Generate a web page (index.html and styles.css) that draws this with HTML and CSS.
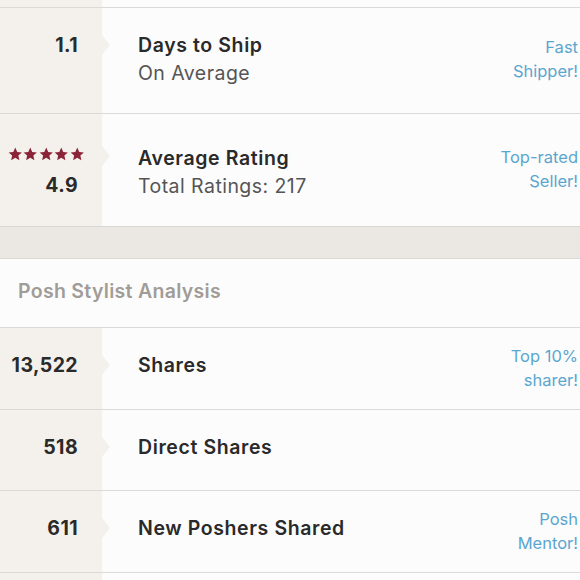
FILE: index.html
```html
<!DOCTYPE html>
<html>
<head>
<meta charset="utf-8">
<link rel="stylesheet" href="styles.css">
</head>
<body>
<div class="page">
  <div class="row row-partial">
    <div class="left"></div>
    <div class="main"></div>
  </div>
  <div class="row row-ship">
    <div class="left"><div class="num">1.1</div><span class="arrow"></span></div>
    <div class="main">
      <div class="text">
        <div class="title">Days to Ship</div>
        <div class="sub">On Average</div>
      </div>
      <div class="badge">Fast<br>Shipper!</div>
    </div>
  </div>
  <div class="row row-rating">
    <div class="left">
      <div class="rating">
        <div class="stars">
          <svg viewBox="0 0 14 14" class="star"><path d="M7 0.6l1.9 4.2 4.5 0.4-3.4 3 1 4.5L7 10.4 3 12.7l1-4.5-3.4-3 4.5-0.4z"/></svg>
          <svg viewBox="0 0 14 14" class="star"><path d="M7 0.6l1.9 4.2 4.5 0.4-3.4 3 1 4.5L7 10.4 3 12.7l1-4.5-3.4-3 4.5-0.4z"/></svg>
          <svg viewBox="0 0 14 14" class="star"><path d="M7 0.6l1.9 4.2 4.5 0.4-3.4 3 1 4.5L7 10.4 3 12.7l1-4.5-3.4-3 4.5-0.4z"/></svg>
          <svg viewBox="0 0 14 14" class="star"><path d="M7 0.6l1.9 4.2 4.5 0.4-3.4 3 1 4.5L7 10.4 3 12.7l1-4.5-3.4-3 4.5-0.4z"/></svg>
          <svg viewBox="0 0 14 14" class="star"><path d="M7 0.6l1.9 4.2 4.5 0.4-3.4 3 1 4.5L7 10.4 3 12.7l1-4.5-3.4-3 4.5-0.4z"/></svg>
        </div>
        <div class="num">4.9</div>
      </div>
      <span class="arrow"></span>
    </div>
    <div class="main">
      <div class="text">
        <div class="title">Average Rating</div>
        <div class="sub">Total Ratings: 217</div>
      </div>
      <div class="badge">Top-rated<br>Seller!</div>
    </div>
  </div>
  <div class="band"></div>
  <div class="section-head">Posh Stylist Analysis</div>
  <div class="row row-stat">
    <div class="left"><div class="num">13,522</div><span class="arrow"></span></div>
    <div class="main">
      <div class="text"><div class="title">Shares</div></div>
      <div class="badge">Top 10%<br>sharer!</div>
    </div>
  </div>
  <div class="row row-stat">
    <div class="left"><div class="num">518</div><span class="arrow"></span></div>
    <div class="main">
      <div class="text"><div class="title">Direct Shares</div></div>
    </div>
  </div>
  <div class="row row-stat">
    <div class="left"><div class="num">611</div><span class="arrow"></span></div>
    <div class="main">
      <div class="text"><div class="title">New Poshers Shared</div></div>
      <div class="badge">Posh<br>Mentor!</div>
    </div>
  </div>
  <div class="row row-stat">
    <div class="left"></div>
    <div class="main"></div>
  </div>
</div>
</body>
</html>
```
FILE: styles.css
```css
html, body {
  margin: 0;
  padding: 0;
  background: #fcfcfc;
}
.page {
  width: 580px;
  height: 580px;
  overflow: hidden;
  font-family: Inter, "Liberation Sans", sans-serif;
  color: #2a2a2a;
}
.row {
  display: flex;
  border-bottom: 1px solid #dcdad7;
}
.row-partial { height: 7px; }
.row-ship { height: 105px; }
.row-rating { height: 112px; border-bottom: 0; }
.row-stat { height: 80.5px; }
.left {
  position: relative;
  width: 102px;
  flex: none;
  background: #f4f1ec;
  display: flex;
  align-items: center;
  justify-content: flex-end;
  padding-right: 24px;
  box-sizing: border-box;
}
.arrow {
  position: absolute;
  right: -8px;
  top: 50%;
  margin-top: -10px;
  width: 0;
  height: 0;
  border-top: 10px solid transparent;
  border-bottom: 10px solid transparent;
  border-left: 8px solid #f4f1ec;
}
.row-ship .arrow { margin-top: -26px; }
.row-rating .arrow { margin-top: -24px; }
.row-stat .arrow { margin-top: -13px; }
.row-ship .num { margin-top: -32px; }
.row-stat .num, .row-stat .text { margin-top: -6px; }
.num {
  font-size: 19.5px;
  font-weight: 700;
  letter-spacing: 0.4px;
  color: #2a2a2a;
}
.rating {
  display: flex;
  flex-direction: column;
  align-items: flex-end;
  gap: 11px;
  margin-top: 4px;
}
.stars {
  display: flex;
  gap: 1px;
  margin-right: -6px;
}
.star {
  width: 14.5px;
  height: 14.5px;
  fill: #8b2437;
}
.main {
  flex: 1;
  display: flex;
  align-items: center;
  justify-content: space-between;
  padding-left: 36px;
  padding-right: 2px;
}
.text { display: flex; flex-direction: column; }
.title {
  font-size: 19.5px;
  font-weight: 600;
  line-height: 28px;
  color: #2a2a2a;
  letter-spacing: 0.6px;
}
.sub {
  font-size: 19.5px;
  font-weight: 400;
  line-height: 28px;
  color: #555;
  letter-spacing: 0.45px;
}
.row-ship .text { margin-top: -4px; }
.row-ship .badge { margin-top: -4px; }
.row-rating .text { margin-top: 4px; }
.row-rating .badge { margin-top: -3px; }
.badge {
  text-align: right;
  font-size: 16.5px;
  line-height: 24px;
  color: #5ba6cf;
  letter-spacing: 0;
}
.band {
  height: 31px;
  background: #ebe8e4;
  border-top: 1px solid #dad7d3;
  border-bottom: 1px solid #dcd9d5;
}
.section-head {
  height: 69px;
  display: flex;
  align-items: center;
  padding-left: 18px;
  padding-bottom: 5px;
  box-sizing: border-box;
  font-size: 19.5px;
  font-weight: 600;
  color: #a19c97;
  letter-spacing: 0.3px;
  border-bottom: 1px solid #dcdad7;
}
```
